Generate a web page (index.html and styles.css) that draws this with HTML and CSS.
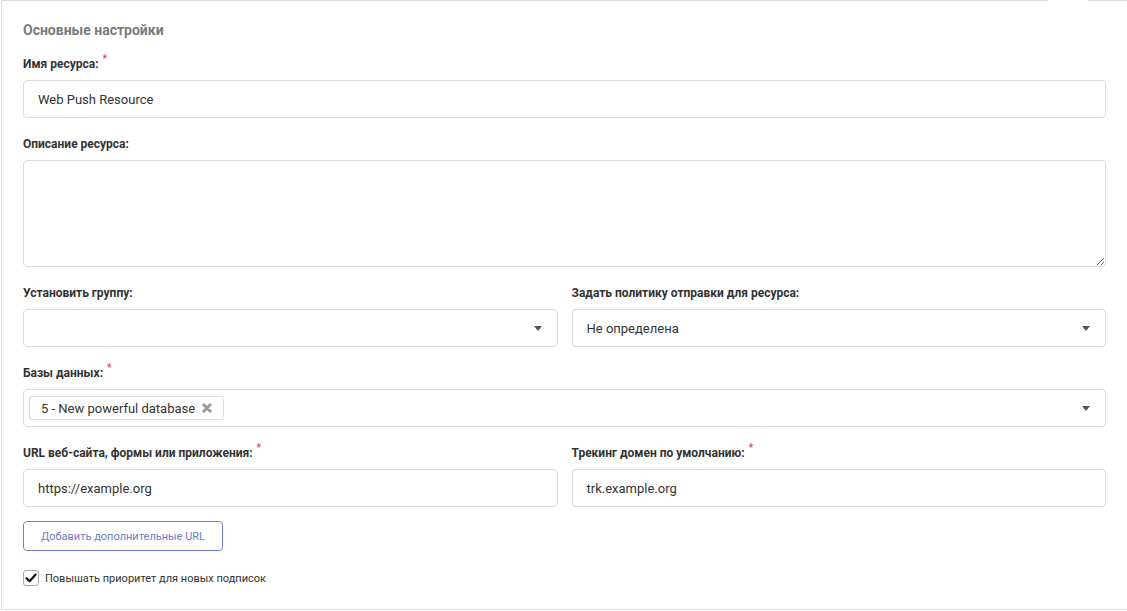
FILE: index.html
```html
<!DOCTYPE html>
<html lang="ru">
<head>
<meta charset="utf-8">
<title>Основные настройки</title>
<link rel="stylesheet" href="styles.css">
</head>
<body>
<div class="panel">
  <h3 class="panel-title">Основные настройки</h3>

  <div class="group">
    <label class="label">Имя ресурса: <span class="req">*</span></label>
    <div class="control"><span class="value">Web Push Resource</span></div>
  </div>

  <div class="group">
    <label class="label">Описание ресурса:</label>
    <textarea class="textarea"></textarea>
  </div>

  <div class="row">
    <div class="group">
      <label class="label">Установить группу:</label>
      <div class="control select"><span class="value"></span><span class="caret"></span></div>
    </div>
    <div class="group">
      <label class="label">Задать политику отправки для ресурса:</label>
      <div class="control select"><span class="value">Не определена</span><span class="caret"></span></div>
    </div>
  </div>

  <div class="group">
    <label class="label">Базы данных: <span class="req">*</span></label>
    <div class="control select multi">
      <span class="tag">5 - New powerful database
        <svg class="tag-x" viewBox="0 0 10 10" width="10" height="10"><path d="M1.8 1.8 L8.2 8.2 M8.2 1.8 L1.8 8.2" stroke="#999" stroke-width="3" stroke-linecap="round"/></svg>
      </span>
      <span class="caret"></span>
    </div>
  </div>

  <div class="row">
    <div class="group">
      <label class="label">URL веб-сайта, формы или приложения: <span class="req">*</span></label>
      <div class="control"><span class="value">https://example.org</span></div>
    </div>
    <div class="group">
      <label class="label">Трекинг домен по умолчанию: <span class="req">*</span></label>
      <div class="control"><span class="value">trk.example.org</span></div>
    </div>
  </div>

  <button class="btn-outline" type="button">Добавить дополнительные URL</button>

  <label class="check">
    <span class="check-box"><svg viewBox="0 0 12 12" width="12" height="12"><path d="M1.5 6.2 L4.6 9.2 L10.6 2.6" fill="none" stroke="#111" stroke-width="2.2" stroke-linecap="round" stroke-linejoin="round"/></svg></span>
    <span class="check-text">Повышать приоритет для новых подписок</span>
  </label>
</div>
</body>
</html>
```

FILE: styles.css
```css
html, body {
  margin: 0;
  padding: 0;
  background: #fff;
}
body {
  font-family: Roboto, "Noto Sans", sans-serif;
  color: #333;
}
.panel {
  position: relative;
  box-sizing: border-box;
  margin-left: 1px;
  width: 1126px;
  height: 610px;
  border: 1px solid #dcdcdc;
  border-right: none;
  padding: 18px 21px 0 21px;
}
.panel::after {
  content: "";
  position: absolute;
  top: -1px;
  left: 1046px;
  width: 40px;
  height: 1px;
  background: #fff;
}
.panel-title {
  margin: 0 0 14px 0;
  height: 22px;
  font-size: 14px;
  line-height: 22px;
  font-weight: 700;
  color: #7a7a7a;
}
.group {
  margin-bottom: 17px;
}
.label {
  display: block;
  height: 18px;
  font-size: 12px;
  line-height: 18px;
  font-weight: 700;
  color: #333;
  margin-bottom: 7px;
}
.req {
  color: #e0456f;
  font-size: 10px;
  line-height: 0;
  position: relative;
  top: -6px;
  margin-left: 1px;
}
.control {
  box-sizing: border-box;
  height: 38px;
  border: 1px solid #dcdcdc;
  border-radius: 4px;
  display: flex;
  align-items: center;
  padding: 0 14px;
  font-size: 13px;
  color: #333;
}
.value { flex: 1; }
.textarea {
  display: block;
  box-sizing: border-box;
  width: 100%;
  height: 107px;
  border: 1px solid #dcdcdc;
  border-radius: 4px;
  margin: 0;
  resize: vertical;
  font-family: inherit;
}
.row {
  display: grid;
  grid-template-columns: 1fr 1fr;
  column-gap: 14px;
}
.select .caret {
  width: 0;
  height: 0;
  border-left: 4px solid transparent;
  border-right: 4px solid transparent;
  border-top: 5px solid #555;
  margin-right: 1px;
  margin-top: 1px;
}
.multi {
  padding-left: 5px;
}
.tag {
  box-sizing: border-box;
  height: 24px;
  display: flex;
  align-items: center;
  gap: 7px;
  padding: 0 11px 0 11px;
  border: 1px solid #dcdcdc;
  border-radius: 3px;
  font-size: 13px;
  color: #333;
  margin-right: auto;
}
.tag-x { display: block; }
.btn-outline {
  display: block;
  box-sizing: border-box;
  width: 200px;
  height: 30px;
  margin: -3px 0 0 0;
  border: 1px solid #7180dc;
  border-radius: 4px;
  background: #fff;
  color: #6f7cc8;
  font-family: inherit;
  font-size: 11px;
  padding: 0;
}
.check {
  display: flex;
  align-items: center;
  gap: 6px;
  margin-top: 19px;
  font-size: 11px;
  color: #333;
}
.check-box {
  box-sizing: border-box;
  width: 16px;
  height: 16px;
  border: 1px solid #a8a8a8;
  border-radius: 3px;
  display: flex;
  align-items: center;
  justify-content: center;
}
.check-box svg { display: block; }
```
